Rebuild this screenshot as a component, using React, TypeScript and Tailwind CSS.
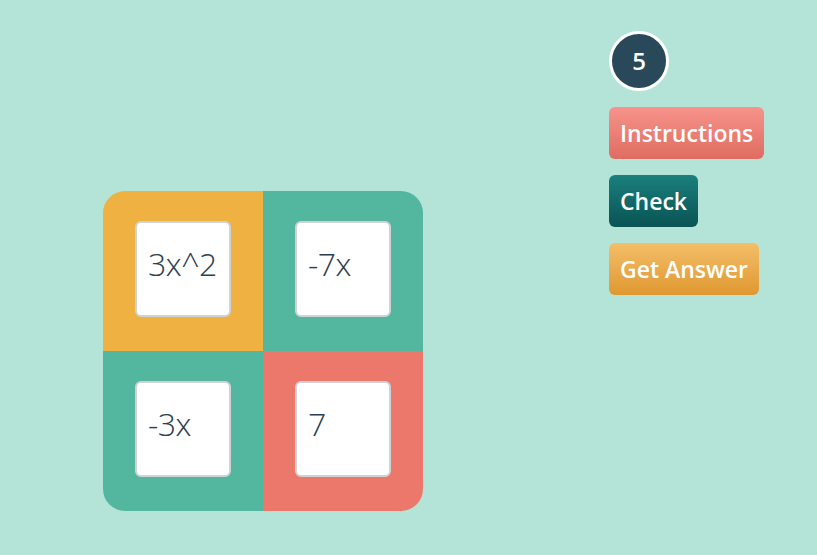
const cells = [
  { value: "3x^2", bg: "bg-[#f0b143]" },
  { value: "-7x", bg: "bg-[#53b7a0]" },
  { value: "-3x", bg: "bg-[#53b7a0]" },
  { value: "7", bg: "bg-[#ec776b]" },
];

const App = () => {
  return (
    <div className="w-full h-[555px] bg-[#b4e4d7] flex items-start overflow-hidden font-['Open_Sans',sans-serif]">
      {/* Area model grid */}
      <div className="ml-[103px] mt-[191px] grid grid-cols-2 w-[320px] h-[320px] rounded-[22px] overflow-hidden">
        {cells.map((cell, i) => (
          <div key={i} className={`${cell.bg} pt-[30px] pl-[32px]`}>
            <div className="w-[96px] h-[96px] bg-white border-2 border-[#cfd3d6] rounded-[6px] flex items-center pl-[11px] pb-[10px]">
              <span className="text-[32px] font-light text-[#2c3e50] tracking-[-0.5px]">{cell.value}</span>
            </div>
          </div>
        ))}
      </div>

      {/* Controls */}
      <div className="ml-[186px] mt-[31px] flex flex-col items-start gap-4">
        <div className="w-[60px] h-[60px] rounded-full bg-[#29485a] border-[3px] border-white flex items-center justify-center text-white text-[24px] font-semibold">
          5
        </div>
        <button className="h-[52px] px-[11px] rounded-[6px] bg-gradient-to-b from-[#f7938b] to-[#df6c61] text-white text-[23px] font-semibold">
          Instructions
        </button>
        <button className="h-[52px] px-[11px] rounded-[6px] bg-gradient-to-b from-[#1a807d] to-[#0a5354] text-white text-[23px] font-semibold">
          Check
        </button>
        <button className="h-[52px] px-[11px] rounded-[6px] bg-gradient-to-b from-[#f4be67] to-[#df982f] text-white text-[23px] font-semibold">
          Get Answer
        </button>
      </div>
    </div>
  );
};

export default App;
